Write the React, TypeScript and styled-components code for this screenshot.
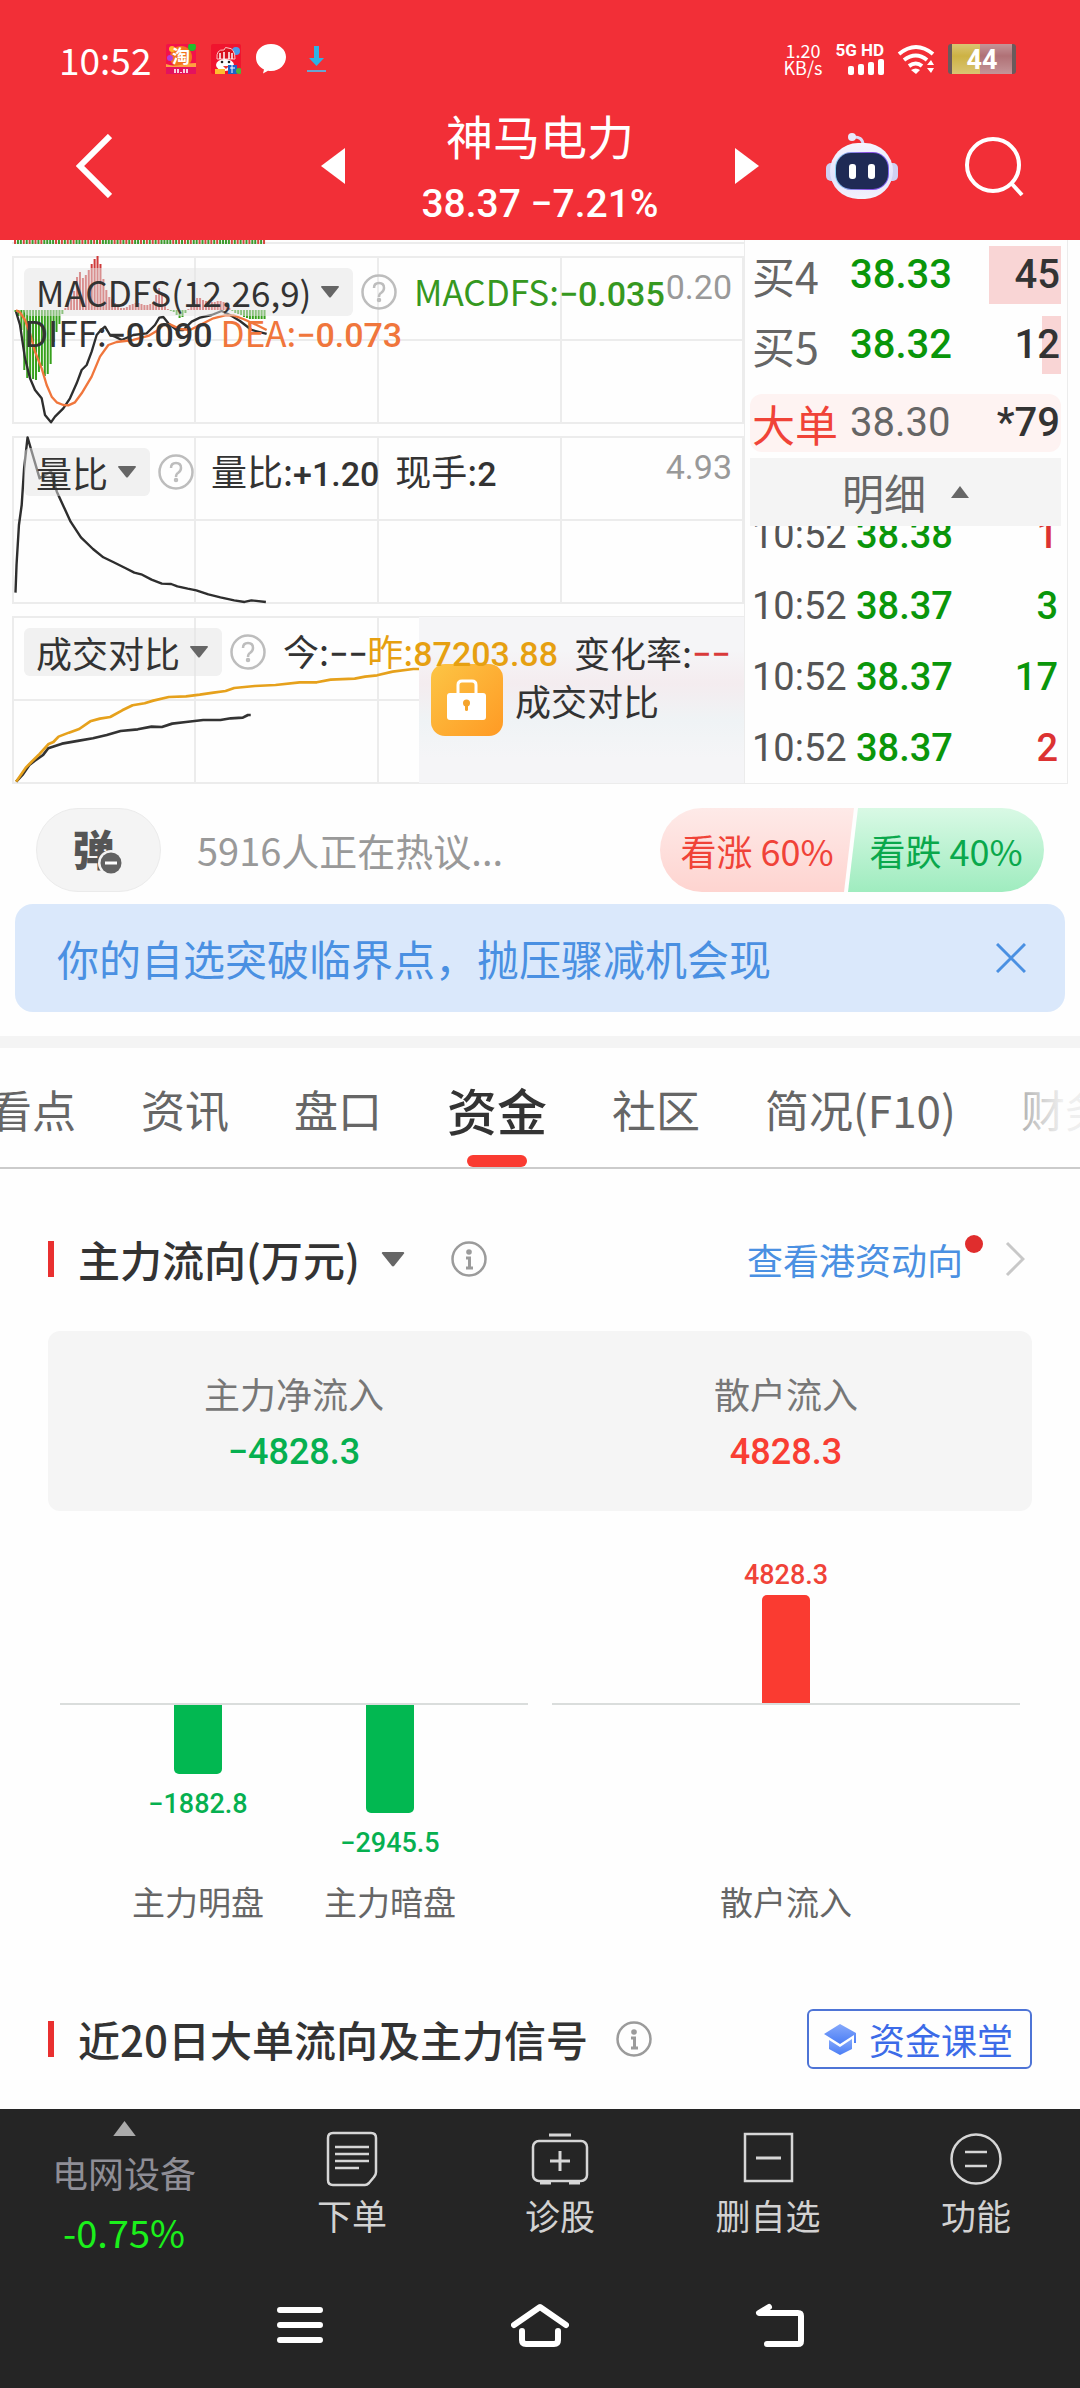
import React from "react";
import styled, { createGlobalStyle } from "styled-components";

const textFont = `"Noto Sans CJK SC", "Noto Sans", sans-serif`;
const numFont = `Roboto, "Noto Sans CJK SC", sans-serif`;

const c = {
  brand: "#f22f37",
  rise: "#f04338",
  fall: "#06b050",
  ink: "#333333",
  sub: "#666666",
  mute: "#999999",
  line: "#ececec",
  blue: "#4a90e2",
  dark: "#252525",
};

const GlobalStyle = createGlobalStyle`
  *, *::before, *::after { box-sizing: border-box; }
  body { margin: 0; background: #fefefe; color: ${c.ink}; font-family: ${textFont}; font-weight: 400; }
  button, select { margin: 0; padding: 0; border: 0; background: none; color: inherit; font: inherit; }
  h1, h2, p, ul { margin: 0; padding: 0; font-weight: inherit; font-size: inherit; }
  ul { list-style: none; }
  svg { display: block; flex: none; }
  a { text-decoration: none; color: inherit; }
`;

const Page = styled.div`
  min-height: 100vh;
  display: flex;
  flex-direction: column;
  overflow: hidden;
`;

/* ---------- header ---------- */

const Header = styled.header`
  background: ${c.brand};
  color: #fff;
`;

const StatusBar = styled.div`
  display: flex;
  align-items: center;
  justify-content: space-between;
  height: 92px;
  padding: 26px 64px 0 59px;
`;

const StatusGroup = styled.div<{ $gap: number }>`
  display: flex;
  align-items: center;
  gap: ${(p) => p.$gap}px;

  > svg:last-child {
    margin-left: 6px;
  }
`;

const Clock = styled.time`
  font-size: 37px;
  line-height: 56px;
`;

const NetSpeed = styled.div`
  text-align: center;
  font-size: 18px;
  line-height: 17px;
`;

const Signal = styled.div`
  display: grid;
  justify-items: end;
  gap: 2px;
  font: 700 17px/14px ${numFont};
`;

const Battery = styled.div`
  width: 68px;
  height: 30px;
  border: solid #6b5a5c;
  border-width: 0 4px;
  border-radius: 3px;
  background: linear-gradient(180deg, rgba(255, 255, 255, 0.25), transparent 40%, rgba(255, 255, 255, 0.25)),
    linear-gradient(90deg, #cdb244 46%, #b07176 46%);
  text-align: center;
  font: 700 27px/32px ${numFont};
`;

const TitleBar = styled.div`
  display: grid;
  grid-template-columns: 1fr 390px 1fr;
  align-items: center;
  height: 148px;
`;

const TitleSide = styled.div<{ $right?: boolean }>`
  display: flex;
  align-items: center;
  justify-content: space-between;
  padding: ${(p) => (p.$right ? "0 56px 0 0" : "0 0 0 76px")};
`;

const StockTitle = styled.div`
  padding-top: 6px;
  text-align: center;
`;

const StockName = styled.h1`
  font-size: 47px;
  line-height: 70px;
`;

const StockPrice = styled.p`
  font: 500 39px/68px ${numFont};
`;

/* ---------- indicator panels ---------- */

const Quotes = styled.main`
  display: grid;
  grid-template-columns: 1fr 324px;
  padding: 0 12px;
`;

const Panels = styled.div`
  display: grid;
  gap: 12px;
`;

const Strip = styled.svg`
  width: 100%;
  height: 4px;
`;

const Panel = styled.section`
  position: relative;
  height: 168px;
  padding: 12px 12px 0;
  font-size: 36px;
`;

const PlotSvg = styled.svg`
  position: absolute;
  inset: 0;
  width: 100%;
  height: 100%;
`;

const Legend = styled.div`
  position: relative;
  display: flex;
  align-items: center;
  height: 48px;
  line-height: 48px;
  white-space: nowrap;
`;

const LegendSub = styled.div`
  position: relative;
  display: flex;
  gap: 8px;
  margin-top: -8px;
  line-height: 48px;
`;

const ChipBox = styled.label`
  position: relative;
  display: block;
  margin-right: 8px;
  border-radius: 6px;
  background: rgba(228, 228, 228, 0.5);

  svg {
    position: absolute;
    right: 14px;
    top: 18px;
    pointer-events: none;
  }
`;

const ChipSelect = styled.select<{ $latin?: boolean }>`
  appearance: none;
  display: block;
  height: 48px;
  padding: 0 41px 0 12px;
  font-size: ${(p) => (p.$latin ? 35 : 36)}px;
  line-height: 48px;
`;

const HelpButton = styled.button`
  margin-right: 17px;
`;

const Value = styled.span<{ $color?: string; $gap?: number; $latin?: boolean }>`
  color: ${(p) => p.$color ?? c.ink};
  margin-right: ${(p) => p.$gap ?? 0}px;
  font-size: ${(p) => (p.$latin ? 35 : 36)}px;

  b {
    font: 500 34px/48px ${numFont};
  }
`;

const MaxValue = styled.span`
  align-self: flex-start;
  margin-left: auto;
  color: ${c.mute};
  font: 400 34px/38px ${numFont};
`;

const LockCover = styled.div`
  position: absolute;
  top: 1px;
  right: 0;
  bottom: 1px;
  width: 325px;
  display: flex;
  align-items: center;
  gap: 12px;
  padding-left: 12px;
  background: linear-gradient(180deg, #f5f5f7 20%, #f4ecef 40%, #eff3f5 62%, #f5f5f7 85%);
  font-size: 36px;
  line-height: 72px;
`;

/* ---------- order book ---------- */

const Book = styled.div`
  padding: 6px 6px 0 5px;
  border: solid ${c.line};
  border-width: 0 1px 1px;
`;

const Orders = styled.table`
  display: block;

  tbody {
    display: grid;
    gap: 12px;
  }
`;

const OrderRow = styled.tr<{ $big?: boolean }>`
  display: grid;
  grid-template-columns: 98px 1fr auto;
  height: 58px;
  padding-left: 2px;
  margin-top: ${(p) => (p.$big ? 8 : 0)}px;
  border-radius: 12px;
  background: ${(p) => (p.$big ? "#fef3f2" : "none")};
  color: ${(p) => (p.$big ? c.rise : c.sub)};
  line-height: 58px;
`;

const OrderSide = styled.th`
  padding: 0;
  text-align: left;
  white-space: nowrap;
  font-weight: 400;
  font-size: 43px;
`;

const OrderPrice = styled.td<{ $flat?: boolean }>`
  padding: 0;
  color: ${(p) => (p.$flat ? c.sub : "#0a960a")};
  font: ${(p) => (p.$flat ? 400 : 500)} 40px/58px ${numFont};
`;

const OrderQty = styled.td<{ $bar: number }>`
  min-width: 72px;
  padding: 0 1px 0 0;
  text-align: right;
  color: ${c.ink};
  font: 500 40px/58px ${numFont};
  background: linear-gradient(#f9d5d5, #f9d5d5) right / ${(p) => p.$bar}px 100% no-repeat;
`;

const DetailToggle = styled.button`
  display: flex;
  align-items: center;
  justify-content: center;
  gap: 25px;
  width: 100%;
  height: 68px;
  margin-top: 6px;
  background: #f4f4f4;
  color: ${c.sub};
  font-size: 42px;
  line-height: 68px;
`;

const TickWindow = styled.div`
  display: flex;
  align-items: flex-end;
  height: 256px;
  overflow: hidden;
`;

const Ticks = styled.table`
  display: block;
  width: 100%;
  font: 500 38px/75px ${numFont};

  tbody {
    display: block;
  }
`;

const TickRow = styled.tr`
  display: grid;
  grid-template-columns: 104px 1fr auto;
  height: 71px;
  padding: 0 3px 0 2px;
`;

const TickCell = styled.td<{ $color: string; $weight?: number }>`
  padding: 0;
  color: ${(p) => p.$color};
  font-weight: ${(p) => p.$weight ?? 500};
`;

/* ---------- discussion & notice ---------- */

const TalkBar = styled.section`
  display: flex;
  align-items: center;
  gap: 36px;
  height: 120px;
  padding: 12px 36px 0;
`;

const BarrageButton = styled.button`
  display: flex;
  align-items: center;
  justify-content: center;
  width: 125px;
  height: 84px;
  padding: 0 10px 4px 0;
  border: 1px solid #ebebeb;
  border-radius: 42px;
  background: #f4f4f4;
  color: #555;
  font-weight: 900;
  font-size: 42px;
  line-height: 60px;
`;

const BarrageIcon = styled.span`
  position: relative;
  display: block;

  svg {
    position: absolute;
    right: -9px;
    bottom: 2px;
  }
`;

const TalkHint = styled.p`
  flex: 1;
  color: ${c.mute};
  font-size: 38px;
  line-height: 56px;
`;

const Votes = styled.div`
  display: flex;
`;

const Vote = styled.button<{ $up?: boolean }>`
  width: ${(p) => (p.$up ? 194 : 196)}px;
  height: 84px;
  margin-left: ${(p) => (p.$up ? 0 : -6)}px;
  border-radius: ${(p) => (p.$up ? "42px 0 0 42px" : "0 42px 42px 0")};
  clip-path: ${(p) =>
    p.$up ? "polygon(0 0, 100% 0, calc(100% - 10px) 100%, 0 100%)" : "polygon(10px 0, 100% 0, 100% 100%, 0 100%)"};
  background: ${(p) => (p.$up ? "linear-gradient(#feeae8, #fed4d0)" : "linear-gradient(#d9f9e5, #9fecbf)")};
  color: ${(p) => (p.$up ? c.rise : "#0aa84c")};
  font-size: 36px;
  line-height: 84px;
  white-space: nowrap;
`;

const Notice = styled.section`
  display: flex;
  align-items: center;
  justify-content: space-between;
  height: 108px;
  margin: 0 15px;
  padding: 0 39px 0 42px;
  border-radius: 18px;
  background: #dae8fb;
  color: ${c.blue};
  font-size: 42px;
  line-height: 60px;
`;

/* ---------- tabs ---------- */

const Tabs = styled.nav`
  position: relative;
  display: flex;
  gap: 65px;
  height: 133px;
  margin-top: 24px;
  border-top: 12px solid #f4f4f4;
  border-bottom: 2px solid #cbcbcb;
  overflow: hidden;

  &::after {
    content: "";
    position: absolute;
    inset: 0 0 0 auto;
    width: 90px;
    background: linear-gradient(90deg, rgba(254, 254, 254, 0.2), rgba(254, 254, 254, 0.9) 80%);
    pointer-events: none;
  }
`;

const Tab = styled.button<{ $active?: boolean }>`
  display: flex;
  flex-direction: column;
  align-items: center;
  justify-content: flex-end;
  flex: none;
  color: ${(p) => (p.$active ? c.ink : c.sub)};
  font-weight: ${(p) => (p.$active ? 500 : 400)};
  font-size: ${(p) => (p.$active ? 50 : 44)}px;
  line-height: 92px;

  &:first-child {
    margin-left: -12px;
  }

  &::after {
    content: "";
    width: 60px;
    height: 12px;
    border-radius: 6px;
    background: ${(p) => (p.$active ? "#fa3b31" : "transparent")};
  }
`;

/* ---------- fund flow ---------- */

const Section = styled.section<{ $top: number }>`
  padding: ${(p) => p.$top}px 48px 0;
`;

const SectionHead = styled.div`
  display: flex;
  align-items: center;
  justify-content: space-between;
  height: 60px;
`;

const HeadLeft = styled.div<{ $gap: number }>`
  display: flex;
  align-items: center;
  gap: ${(p) => p.$gap}px;
`;

const HeadTitle = styled.h2`
  display: flex;
  align-items: center;
  gap: 24px;
  font-weight: 500;
  font-size: 42px;
  line-height: 60px;

  &::before {
    content: "";
    width: 6px;
    height: 36px;
    background: #e93030;
  }
`;

const TitleButton = styled.button`
  display: flex;
  align-items: center;
  gap: 21px;
`;

const HkLink = styled.a`
  display: flex;
  align-items: center;
  gap: 2px;
  padding-right: 7px;
  color: ${c.blue};
  font-size: 36px;
  line-height: 60px;
`;

const NewDot = styled.i`
  width: 18px;
  height: 18px;
  margin: 0 20px 30px 0;
  border-radius: 9px;
  background: #e02d2d;
`;

const ClassLink = styled.a`
  display: flex;
  align-items: center;
  gap: 12px;
  height: 60px;
  padding: 0 17px 0 15px;
  border: 2px solid #4e74d6;
  border-radius: 6px;
  color: #3c6be8;
  font-size: 36px;
  line-height: 56px;
`;

const Summary = styled.div`
  display: grid;
  grid-template-columns: 1fr 1fr;
  height: 180px;
  margin-top: 42px;
  padding-top: 34px;
  border-radius: 12px;
  background: #f5f5f5;
  text-align: center;
`;

const SummaryLabel = styled.p`
  color: #777;
  font-size: 36px;
  line-height: 56px;
`;

const SummaryValue = styled.p<{ $up?: boolean }>`
  color: ${(p) => (p.$up ? "#f93e33" : c.fall)};
  font: 500 36px/62px ${numFont};
`;

const FlowChart = styled.div`
  display: grid;
  grid-template-columns: 1fr 1fr;
  gap: 24px;
  padding: 0 12px;
`;

const FlowHalf = styled.div<{ $up?: boolean }>`
  display: flex;
  justify-content: center;
  align-items: ${(p) => (p.$up ? "flex-end" : "flex-start")};
  height: ${(p) => (p.$up ? 194 : 168)}px;
  border-bottom: ${(p) => (p.$up ? "2px solid #dadddc" : "0")};
`;

const FlowSlot = styled.div<{ $up?: boolean }>`
  display: flex;
  flex-direction: ${(p) => (p.$up ? "column-reverse" : "column")};
  align-items: center;
  width: 192px;
  color: ${(p) => (p.$up ? c.rise : c.fall)};
  font: 500 27px/32px ${numFont};
  gap: ${(p) => (p.$up ? 4 : 14)}px;
`;

const FlowBar = styled.div<{ $up?: boolean }>`
  width: 48px;
  border-radius: ${(p) => (p.$up ? "5px 5px 0 0" : "0 0 5px 5px")};
  background: ${(p) => (p.$up ? "#fa3b31" : "#02b851")};
`;

const FlowLabels = styled.div`
  display: flex;
  justify-content: center;
  color: ${c.sub};
  font-size: 33px;
  line-height: 56px;

  span {
    width: 192px;
    text-align: center;
  }
`;

/* ---------- bottom bars ---------- */

const Bottom = styled.footer`
  margin-top: auto;
  background: ${c.dark};
`;

const ActionBar = styled.nav`
  display: grid;
  grid-template-columns: 248px repeat(4, 1fr);
  height: 160px;
`;

const Sector = styled.a`
  display: flex;
  flex-direction: column;
  align-items: center;
  padding-top: 12px;
  color: #8f8e96;
  font-size: 36px;
  line-height: 60px;

  svg {
    margin-bottom: 6px;
  }

  strong {
    color: #1bf01b;
    font-weight: 400;
    font-size: 38px;
  }
`;

const Action = styled.button`
  display: flex;
  flex-direction: column;
  align-items: center;
  padding-top: 20px;
  color: #d2d2d2;
  font-size: 35px;
  line-height: 56px;
`;

const SystemBar = styled.nav`
  display: grid;
  grid-template-columns: repeat(3, 240px);
  justify-content: center;
  height: 119px;
  padding-bottom: 7px;
`;

const SystemKey = styled.button`
  display: flex;
  align-items: center;
  justify-content: center;
`;

/* ---------- drawings ---------- */

const TaobaoIcon = () => (
  <svg width="30" height="30" viewBox="0 0 30 30">
    <rect width="30" height="30" rx="2" fill="#f3114a" />
    <circle cx="15" cy="13" r="11" fill="#f2751e" />
    <circle cx="26" cy="3" r="4" fill="#22c02c" />
    <circle cx="4" cy="14" r="3" fill="#b43bd8" />
    <circle cx="6" cy="5" r="3" fill="#ffb52a" />
    <path d="M0 20q8 3 14 1t16-2v4H0z" fill="#ffa040" />
    <rect y="23" width="30" height="7" fill="#e3125e" />
    <text x="15" y="19" textAnchor="middle" fontSize="18" fontWeight="700" fill="#fff" fontFamily="Noto Sans CJK SC">淘</text>
    <path d="M9 25v4M12 25v4M18 25v4M21 25v4M15 28v1" stroke="#fff" strokeWidth="1.6" />
  </svg>
);

const MallIcon = () => (
  <svg width="30" height="30" viewBox="0 0 30 30">
    <rect width="30" height="30" rx="2" fill="#f0142e" />
    <circle cx="25" cy="7" r="4" fill="#4b9bea" />
    <path d="M6 15Q5 5 13 6q1-4 4-2 7 0 7 11z" fill="#d8121f" stroke="#ffc7c7" strokeWidth="1" />
    <path d="M9 9v6M13 8v7M18 8v7M21 9v6" stroke="#fff" strokeWidth="1.5" />
    <ellipse cx="14" cy="21" rx="9" ry="6" fill="#fff" />
    <circle cx="11" cy="18" r="1.3" fill="#222" />
    <circle cx="18" cy="18" r="1.3" fill="#222" />
    <path d="M12 22h6l-3 3z" fill="#e33" />
    <rect x="4" y="25" width="10" height="5" fill="#ffbe2e" />
    <rect x="17" y="21" width="9" height="9" fill="#1d62c8" />
    <path d="M19 24h5M21 21v8" stroke="#fff" strokeWidth="1" />
    <circle cx="28" cy="27" r="3" fill="#4fb53a" />
  </svg>
);

const BubbleIcon = () => (
  <svg width="30" height="30" viewBox="0 0 30 30">
    <path d="M15 0c9 0 15 6 15 13S24 27 15 27c-1 0-2 0-3-.2L7 29.500l1-4C3 23 0 19 0 13 0 6 6 0 15 0z" fill="#fff" />
  </svg>
);

const DownloadIcon = () => (
  <svg width="19" height="28" viewBox="0 0 19 28">
    <path d="M7 1h5v12h5l-7.500 8L2 13h5z" fill="#2fb2e4" />
    <rect y="25" width="19" height="2" fill="#6aa5d0" />
  </svg>
);

const SignalIcon = () => (
  <svg width="36" height="16" viewBox="0 0 36 16" fill="#fff">
    <rect x="0" y="7" width="6" height="9" rx="2" />
    <rect x="10" y="5" width="6" height="11" rx="2" />
    <rect x="20" y="3" width="6" height="13" rx="2" />
    <rect x="30" y="0" width="6" height="16" rx="2" />
  </svg>
);

const WifiIcon = () => (
  <svg width="38" height="30" viewBox="0 0 38 30" fill="none" stroke="#fff" strokeWidth="4">
    <path d="M2 10q17-14 34 0" />
    <path d="M7 16q12-9 23 0" />
    <path d="M12 22q7-5 13 0" />
    <path d="M14 26q5-3 9 0l-4 4z" fill="#fff" stroke="none" />
    <path d="M30 21l4-5 3 5zM30 24h7l-3 5z" fill="#fff" stroke="none" />
  </svg>
);

const BackIcon = () => (
  <svg width="36" height="64" viewBox="0 0 36 64">
    <path d="M34 2 4 32l30 30" fill="none" stroke="#fff" strokeWidth="6" />
  </svg>
);

const StepIcon = ({ next }: { next?: boolean }) => (
  <svg width="24" height="36" viewBox="0 0 24 36">
    <path d={next ? "M0 0v36l24-18z" : "M24 0v36L0 18z"} fill="#fff" />
  </svg>
);

const RobotIcon = () => (
  <svg width="72" height="67" viewBox="0 0 72 67">
    <defs>
      <linearGradient id="shell" x1="0" y1="0" x2="0" y2="1">
        <stop offset="0" stopColor="#f6f5ff" />
        <stop offset="60%" stopColor="#e3e3fb" />
        <stop offset="1" stopColor="#f3f3fd" />
      </linearGradient>
      <linearGradient id="visor" x1="0" y1="0" x2="1" y2="0">
        <stop offset="0" stopColor="#8bd3f0" />
        <stop offset="60%" stopColor="#8a4ce0" />
        <stop offset="1" stopColor="#7a62f0" />
      </linearGradient>
    </defs>
    <path d="M26 4q11-1 11 8" fill="none" stroke="#dcdcf8" strokeWidth="3" />
    <circle cx="26" cy="4" r="4" fill="#e9e9fc" />
    <rect x="0" y="30" width="12" height="18" rx="5" fill="#cfd0f2" />
    <rect x="60" y="30" width="12" height="18" rx="5" fill="#cfd0f2" />
    <rect x="4" y="10" width="63" height="56" rx="28" fill="url(#shell)" />
    <rect x="9" y="19" width="54" height="38" rx="16" fill="url(#visor)" />
    <rect x="10" y="20" width="52" height="36" rx="15" fill="#1f2a55" />
    <rect x="23" y="31" width="7" height="15" rx="3" fill="#fff" />
    <rect x="42" y="31" width="7" height="15" rx="3" fill="#fff" />
  </svg>
);

const SearchIcon = () => (
  <svg width="60" height="62" viewBox="0 0 60 62" fill="none" stroke="#fff" strokeWidth="4">
    <circle cx="29" cy="30" r="26" />
    <path d="M48 49l10 11" />
  </svg>
);

const Caret = ({ up, w = 18, h = 12, color = "#666" }: { up?: boolean; w?: number; h?: number; color?: string }) => (
  <svg width={w} height={h} viewBox="0 0 18 12">
    <path d={up ? "M9 0l9 12H0z" : "M1 0h16q1 0 1 1L10 11q-1 1-2 0L0 1q0-1 1-1z"} fill={color} />
  </svg>
);

const HelpIcon = () => (
  <svg width="36" height="36" viewBox="0 0 36 36" fill="none" stroke="#bdbdbd" strokeWidth="2.5">
    <circle cx="18" cy="18" r="16.5" />
    <path d="M13 14q0-5 5-5t5 5q0 3-3 5-2 1-2 4" />
    <circle cx="18" cy="26" r="1" />
  </svg>
);

const InfoIcon = () => (
  <svg width="36" height="36" viewBox="0 0 36 36" fill="none" stroke="#9b9b9b" strokeWidth="2.5">
    <circle cx="18" cy="18" r="16.5" />
    <circle cx="18" cy="11" r="2.8" fill="#9b9b9b" stroke="none" />
    <path d="M15 17h3.500v10M15 27h7" strokeWidth="3" />
  </svg>
);

const LockIcon = () => (
  <svg width="72" height="72" viewBox="0 0 72 72">
    <defs>
      <linearGradient id="lock" x1="0" y1="0" x2="1" y2="1">
        <stop offset="0" stopColor="#fcc545" />
        <stop offset="1" stopColor="#ff9a24" />
      </linearGradient>
    </defs>
    <rect width="72" height="72" rx="14" fill="url(#lock)" />
    <path d="M27 30V21q0-4 4-4h10q4 0 4 4v9" fill="none" stroke="#fff" strokeWidth="3" />
    <rect x="16" y="29" width="39" height="27" rx="3" fill="#fff" />
    <circle cx="35.5" cy="39" r="3.5" fill="#f5a42c" />
    <rect x="34" y="40" width="3" height="7" rx="1.5" fill="#f5a42c" />
  </svg>
);

const MinusBadge = () => (
  <svg width="26" height="26" viewBox="0 0 26 26">
    <circle cx="13" cy="13" r="13" fill="#f4f4f4" />
    <circle cx="13" cy="13" r="10.5" fill="#626262" />
    <rect x="7" y="11.5" width="12" height="3" fill="#fff" />
  </svg>
);

const CloseIcon = () => (
  <svg width="30" height="30" viewBox="0 0 30 30">
    <path d="M1 1l28 28M29 1L1 29" stroke={c.blue} strokeWidth="3" />
  </svg>
);

const ChevronIcon = () => (
  <svg width="20" height="36" viewBox="0 0 20 36">
    <path d="M2 2 18 18 2 34" fill="none" stroke="#c8c8c8" strokeWidth="3" />
  </svg>
);

const CapIcon = () => (
  <svg width="33" height="31" viewBox="0 0 33 31">
    <defs>
      <linearGradient id="cap" x1="0" y1="0" x2="0" y2="1">
        <stop offset="0" stopColor="#86a9fb" />
        <stop offset="1" stopColor="#4a7df5" />
      </linearGradient>
    </defs>
    <path d="M16 0 32 9v10h-2v-8L16 20 0 10z" fill="url(#cap)" />
    <path d="M5 16 16 23 28 15v10L16 31 5 25z" fill="url(#cap)" />
  </svg>
);

const iconProps = { width: 58, height: 58, viewBox: "0 0 58 58", fill: "none", stroke: "#d6d6d6", strokeWidth: 2.5 };

const OrderIcon = () => (
  <svg {...iconProps}>
    <path d="M10 4h38q5 0 5 5v34q0 3-2 5l-5 6q-2 2-4 2H10q-5 0-5-5V9q0-5 5-5z" />
    <path d="M12 18h34M12 25h34M12 32h34M12 39h24" />
  </svg>
);

const DiagnoseIcon = () => (
  <svg {...iconProps}>
    <path d="M18 6h22" strokeWidth="3" />
    <rect x="2" y="12" width="54" height="40" rx="6" />
    <path d="M29 22v20M19 32h20M9 54h11M38 54h11" strokeWidth="3" />
  </svg>
);

const RemoveIcon = () => (
  <svg {...iconProps}>
    <rect x="6" y="5" width="47" height="47" />
    <path d="M17 29h25" strokeWidth="3" />
  </svg>
);

const FeatureIcon = () => (
  <svg {...iconProps}>
    <circle cx="29" cy="30" r="24.5" />
    <path d="M18 23h22M18 37h22" />
  </svg>
);

/* ---------- chart data ---------- */

const macdBars: number[] = [
  -2, -6, -20, -60, -68, -68, -69, -70, -62, -56, -66, -64, -54, -32, -22, -14, -4,
  2, 7, 12, 19, 33, 38, 32, 35, 40, 46, 51, 54, 46, 31, 20, 13, 11, 7, 4, 2, 2, 3, 5, 6, 7, 7, 6, 5, 5, 6, 8, 15, 22, 15,
  7, 1, -1, -2, -5, -8, -7, -3, 1, 3, 10, 12, 12, 10, 9, 9, 8, 8, 9, 9, 8, 5, 2, -1, -3, -4, -5, -7, -8, -9, -9, -9, -9, -9, -9,
];

const macdDiff =
  "48,230 60,270 75,370 90,430 105,465 125,490 135,540 153,562 165,545 190,520 210,490 230,445 245,405 260,390 275,350 290,300 302,286 315,275 330,300 345,305 365,315 400,300 440,295 465,270 478,248 490,246 505,265 530,285 550,285 575,260 600,248 635,240 665,228 690,240 720,258 755,285 800,297";
const macdDea =
  "48,226 60,232 75,255 90,295 105,350 125,400 140,450 155,485 170,502 190,510 205,511 225,502 245,475 275,425 300,365 325,330 350,321 400,315 445,303 475,285 490,270 510,268 540,282 570,285 600,270 640,250 675,241 700,241 730,252 770,270 800,285";
const ratioLine =
  "45,503 48,420 55,300 63,240 70,130 80,37 95,90 115,160 130,150 148,140 165,200 185,245 205,290 235,337 270,372 300,397 330,412 365,430 390,443 410,448 440,464 470,476 497,477 515,484 545,491 570,496 605,508 640,517 680,526 710,531 730,526 772,531";
const volumeToday =
  "47,1070 65,1050 85,1020 100,1008 125,990 140,970 180,956 230,947 270,940 310,930 350,918 400,913 440,905 470,906 500,896 540,891 590,885 640,885 670,880 705,878 720,870 728,870";
const volumePrev =
  "47,1070 75,1028 95,1007 115,987 140,958 155,951 170,935 200,923 230,912 262,889 290,881 320,876 355,856 385,841 420,835 445,827 490,816 540,814 580,809 620,803 655,798 680,789 740,783 800,780 870,772 920,772 960,764 1030,761 1060,755 1095,751 1140,740 1200,732 1217,732";

const Grid = () => (
  <g fill="none" stroke={c.line} strokeWidth="2">
    <rect x="1" y="1" width="730" height="166" />
    <path d="M0 84h732M183 0v168M366 0v168M549 0v168" />
  </g>
);

const Plot = ({ children }: { children: React.ReactNode }) => (
  <PlotSvg viewBox="0 0 732 168" preserveAspectRatio="none" aria-hidden="true">
    <Grid />
    {children}
  </PlotSvg>
);

const Indicator = ({ name, latin }: { name: string; latin?: boolean }) => (
  <>
    <ChipBox>
      <ChipSelect aria-label={name} $latin={latin}>
        <option>{name}</option>
      </ChipSelect>
      <Caret />
    </ChipBox>
    <HelpButton aria-label="说明">
      <HelpIcon />
    </HelpButton>
  </>
);

const orders = [
  { side: "买4", price: "38.33", qty: "45", bar: 72 },
  { side: "买5", price: "38.32", qty: "12", bar: 19 },
  { side: "大单", price: "38.30", qty: "*79", bar: 0, big: true },
];

const ticks = [
  { price: "38.38", qty: "1", up: true },
  { price: "38.37", qty: "3" },
  { price: "38.37", qty: "17" },
  { price: "38.37", qty: "2", up: true },
];

const tabs = ["看点", "资讯", "盘口", "资金", "社区", "简况(F10)", "财务"];

const flows = [
  [
    { label: "主力明盘", value: -1882.8 },
    { label: "主力暗盘", value: -2945.5 },
  ],
  [{ label: "散户流入", value: 4828.3 }],
];

const signed = (v: number) => (v < 0 ? "−" : "") + Math.abs(v).toFixed(1);
const barHeight = (v: number, group: { value: number }[]) =>
  Math.round((108 * Math.abs(v)) / Math.max(...group.map((g) => Math.abs(g.value))));

const actions = [
  { label: "下单", icon: <OrderIcon /> },
  { label: "诊股", icon: <DiagnoseIcon /> },
  { label: "删自选", icon: <RemoveIcon /> },
  { label: "功能", icon: <FeatureIcon /> },
];

export default function App() {
  return (
    <Page>
      <GlobalStyle />
      <Header>
        <StatusBar>
          <StatusGroup $gap={15}>
            <Clock>10:52</Clock>
            <TaobaoIcon />
            <MallIcon />
            <BubbleIcon />
            <DownloadIcon />
          </StatusGroup>
          <StatusGroup $gap={13}>
            <NetSpeed>
              1.20
              <br />
              KB/s
            </NetSpeed>
            <Signal>
              5G HD
              <SignalIcon />
            </Signal>
            <WifiIcon />
            <Battery>44</Battery>
          </StatusGroup>
        </StatusBar>
        <TitleBar>
          <TitleSide>
            <button aria-label="返回"><BackIcon /></button>
            <button aria-label="上一只"><StepIcon /></button>
          </TitleSide>
          <StockTitle>
            <StockName>神马电力</StockName>
            <StockPrice>38.37 −7.21%</StockPrice>
          </StockTitle>
          <TitleSide $right>
            <button aria-label="下一只"><StepIcon next /></button>
            <button aria-label="智能助手"><RobotIcon /></button>
            <button aria-label="搜索"><SearchIcon /></button>
          </TitleSide>
        </TitleBar>
      </Header>

      <Quotes>
        <Panels>
          <Strip viewBox="0 0 732 4" preserveAspectRatio="none" aria-hidden="true">
            <path d="M0 3h732" stroke={c.line} strokeWidth="2" />
            {Array.from({ length: 86 }, (_, i) => (
              <rect key={i} x={2 + i * 2.93} width="2" height="4" fill={(i * 7 + (i >> 2)) % 5 < 2 ? "#d9453f" : "#3c9a2c"} />
            ))}
          </Strip>
          <Panel>
            <Plot>
              {macdBars.map((v, i) => (
                <rect key={i} x={2.5 + i * 2.93} y={v > 0 ? 54 - v : 54} width="2" height={Math.abs(v)} fill={v > 0 ? "#cf3a3a" : "#37a01c"} />
              ))}
              <g transform="translate(-12 -21) scale(0.3333)" fill="none" strokeWidth="7" strokeLinejoin="round">
                <polyline points={macdDiff} stroke="#2e2e2e" />
                <polyline points={macdDea} stroke="#f0763c" />
              </g>
            </Plot>
            <Legend>
              <Indicator name="MACDFS(12,26,9)" latin />
              <Value $color="#36981f" $latin>MACDFS:<b>−0.035</b></Value>
              <MaxValue>0.20</MaxValue>
            </Legend>
            <LegendSub>
              <Value $latin>DIFF:<b>−0.090</b></Value>
              <Value $color="#f0763c" $latin>DEA:<b>−0.073</b></Value>
            </LegendSub>
          </Panel>
          <Panel>
            <Plot>
              <g transform="translate(-12 -11) scale(0.3444 0.3333)" fill="none" strokeWidth="7" strokeLinejoin="round">
                <polyline points={ratioLine} stroke="#2e2e2e" />
              </g>
            </Plot>
            <Legend>
              <Indicator name="量比" />
              <Value $gap={16}>量比:<b>+1.20</b></Value>
              <Value>现手:<b>2</b></Value>
              <MaxValue>4.93</MaxValue>
            </Legend>
          </Panel>
          <Panel>
            <Plot>
              <g transform="translate(-12 -191) scale(0.3444 0.3333)" fill="none" strokeWidth="8" strokeLinejoin="round">
                <polyline points={volumeToday} stroke="#333" />
                <polyline points={volumePrev} stroke="#e6a11c" />
              </g>
            </Plot>
            <LockCover>
              <LockIcon />
              成交对比
            </LockCover>
            <Legend>
              <Indicator name="成交对比" />
              <Value>今:<b>−−</b></Value>
              <Value $color="#e6a011" $gap={16}>昨:<b>87203.88</b></Value>
              <Value>变化率:</Value>
              <Value $color="#d93a3a"><b>−−</b></Value>
            </Legend>
          </Panel>
        </Panels>

        <Book>
          <Orders>
            <tbody>
              {orders.map((o) => (
                <OrderRow key={o.side} $big={o.big}>
                  <OrderSide scope="row">{o.side}</OrderSide>
                  <OrderPrice $flat={o.big}>{o.price}</OrderPrice>
                  <OrderQty $bar={o.bar}>{o.qty}</OrderQty>
                </OrderRow>
              ))}
            </tbody>
          </Orders>
          <DetailToggle>
            明细
            <Caret up />
          </DetailToggle>
          <TickWindow>
            <Ticks>
              <tbody>
                {ticks.map((t, i) => (
                  <TickRow key={i}>
                    <TickCell $color="#555" $weight={400}>10:52</TickCell>
                    <TickCell $color="#0a960a">{t.price}</TickCell>
                    <TickCell $color={t.up ? "#dc3232" : "#0a960a"}>{t.qty}</TickCell>
                  </TickRow>
                ))}
              </tbody>
            </Ticks>
          </TickWindow>
        </Book>
      </Quotes>

      <TalkBar>
        <BarrageButton aria-label="弹幕开关">
          <BarrageIcon>
            弹
            <MinusBadge />
          </BarrageIcon>
        </BarrageButton>
        <TalkHint>5916人正在热议...</TalkHint>
        <Votes>
          <Vote $up>看涨 60%</Vote>
          <Vote>看跌 40%</Vote>
        </Votes>
      </TalkBar>

      <Notice>
        <p>你的自选突破临界点，抛压骤减机会现</p>
        <button aria-label="关闭"><CloseIcon /></button>
      </Notice>

      <Tabs>
        {tabs.map((t) => (
          <Tab key={t} $active={t === "资金"}>{t}</Tab>
        ))}
      </Tabs>

      <Section $top={60}>
        <SectionHead>
          <HeadLeft $gap={46}>
            <HeadTitle>
              <TitleButton aria-haspopup="menu">
                主力流向(万元)
                <Caret w={24} h={15} />
              </TitleButton>
            </HeadTitle>
            <button aria-label="说明"><InfoIcon /></button>
          </HeadLeft>
          <HkLink href="#hk">
            查看港资动向
            <NewDot />
            <ChevronIcon />
          </HkLink>
        </SectionHead>

        <Summary>
          <div>
            <SummaryLabel>主力净流入</SummaryLabel>
            <SummaryValue>−4828.3</SummaryValue>
          </div>
          <div>
            <SummaryLabel>散户流入</SummaryLabel>
            <SummaryValue $up>4828.3</SummaryValue>
          </div>
        </Summary>

        <FlowChart>
          {flows.map((group, g) => (
            <div key={g}>
              <FlowHalf $up>
                {group.filter((f) => f.value > 0).map((f) => (
                  <FlowSlot key={f.label} $up>
                    <FlowBar $up style={{ height: barHeight(f.value, group) }} />
                    {signed(f.value)}
                  </FlowSlot>
                ))}
              </FlowHalf>
              <FlowHalf>
                {group.filter((f) => f.value < 0).map((f) => (
                  <FlowSlot key={f.label}>
                    <FlowBar style={{ height: barHeight(f.value, group) }} />
                    {signed(f.value)}
                  </FlowSlot>
                ))}
              </FlowHalf>
              <FlowLabels>
                {group.map((f) => (
                  <span key={f.label}>{f.label}</span>
                ))}
              </FlowLabels>
            </div>
          ))}
        </FlowChart>
      </Section>

      <Section $top={80}>
        <SectionHead>
          <HeadLeft $gap={28}>
            <HeadTitle>近20日大单流向及主力信号</HeadTitle>
            <button aria-label="说明"><InfoIcon /></button>
          </HeadLeft>
          <ClassLink href="#class">
            <CapIcon />
            资金课堂
          </ClassLink>
        </SectionHead>
      </Section>

      <Bottom>
        <ActionBar>
          <Sector href="#sector">
            <Caret up w={27} h={15} color="#aaa" />
            <span>电网设备</span>
            <strong>-0.75%</strong>
          </Sector>
          {actions.map((a) => (
            <Action key={a.label}>
              {a.icon}
              {a.label}
            </Action>
          ))}
        </ActionBar>
        <SystemBar>
          <SystemKey aria-label="最近任务">
            <svg width="46" height="38" viewBox="0 0 46 38" stroke="#fff" strokeWidth="6" strokeLinecap="round">
              <path d="M3 4h40M3 19h40M3 34h40" />
            </svg>
          </SystemKey>
          <SystemKey aria-label="主页">
            <svg width="58" height="44" viewBox="0 0 58 44" fill="none" stroke="#fff" strokeWidth="6" strokeLinecap="round" strokeLinejoin="round">
              <path d="M3 22 29 4l26 18" />
              <path d="M11 28v9q0 4 4 4h28q4 0 4-4v-9" />
            </svg>
          </SystemKey>
          <SystemKey aria-label="返回键">
            <svg width="50" height="44" viewBox="0 0 50 44" fill="none" stroke="#fff" strokeWidth="6" strokeLinecap="round" strokeLinejoin="round">
              <path d="M14 4 4 10h39q3 0 3 3v25q0 3-3 3H12" />
            </svg>
          </SystemKey>
        </SystemBar>
      </Bottom>
    </Page>
  );
}
